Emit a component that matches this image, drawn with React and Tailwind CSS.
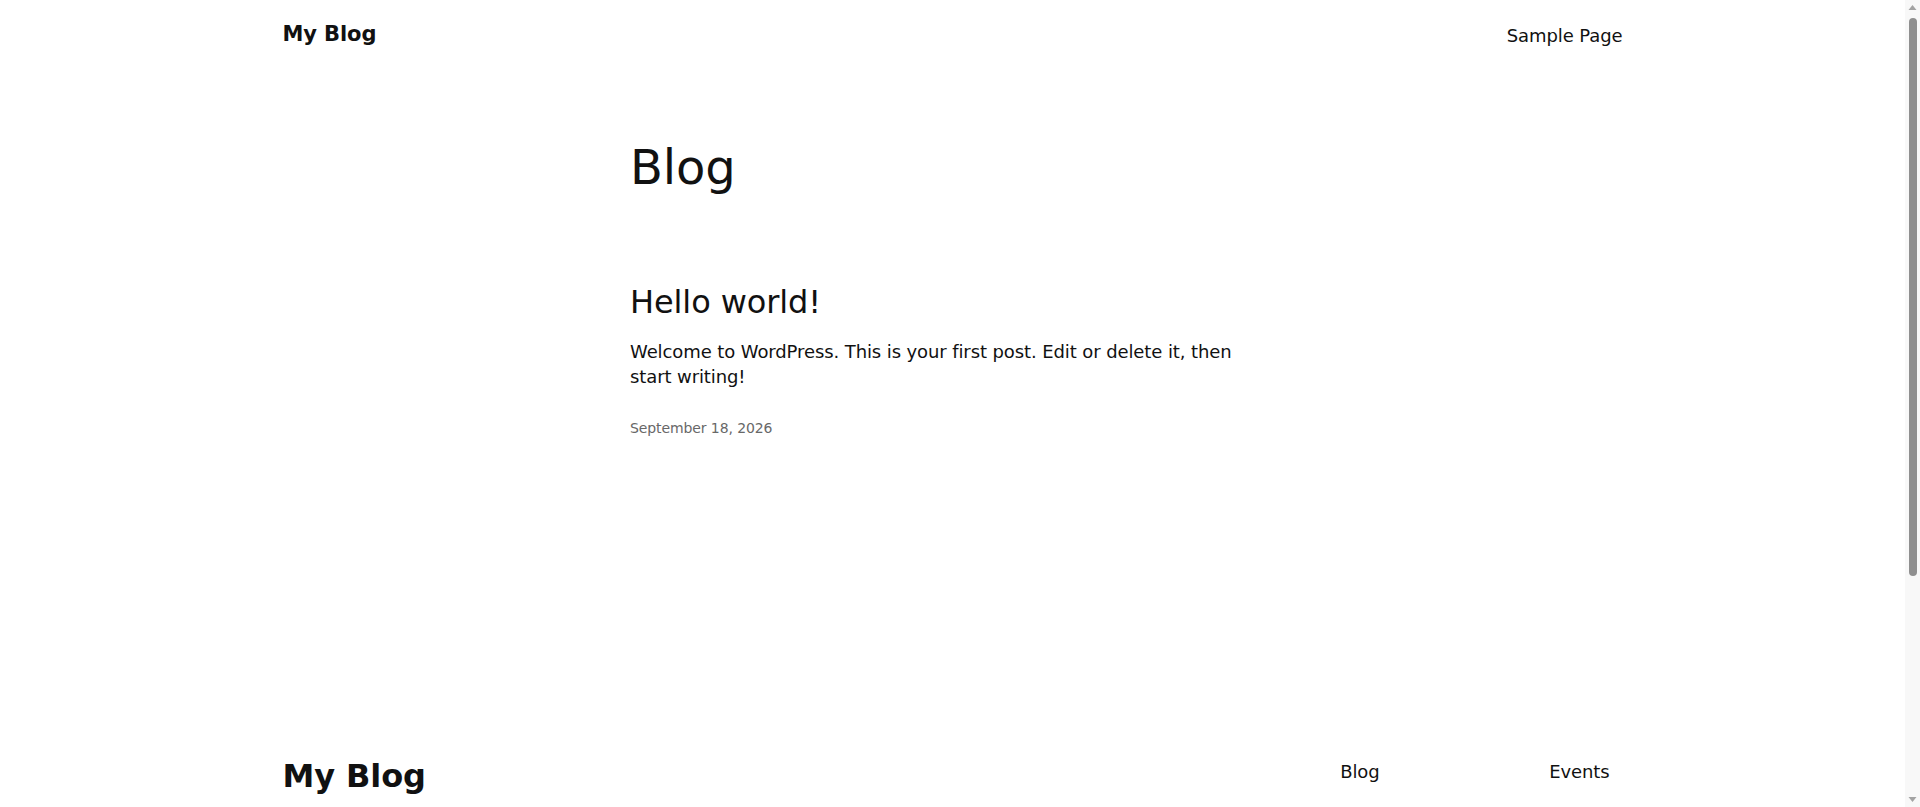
function Scrollbar() {
    // Drawn stand-in for the browser's classic vertical scrollbar
    return (
        <div className="fixed top-0 right-0 h-screen w-[15px] bg-[#f8f8f8] flex flex-col items-center">
            <svg width="15" height="15" viewBox="0 0 15 15" className="shrink-0">
                <polygon points="3.5,10 11.5,10 7.5,5" fill="#a3a3a3" />
            </svg>
            <div className="w-[8px] h-[558px] mt-[3px] rounded-full bg-[#8f8f8f]"></div>
            <div className="flex-1"></div>
            <svg width="15" height="15" viewBox="0 0 15 15" className="shrink-0">
                <polygon points="3.5,5 11.5,5 7.5,10" fill="#a3a3a3" />
            </svg>
        </div>
    );
}

export default function App() {
    // Footer link columns
    const columns = [
        ["Blog", "About", "FAQs", "Authors"],
        ["Events", "Shop", "Patterns", "Themes"],
    ];

    return (
        <div className="min-h-screen bg-white text-[#111111] font-['DejaVu_Sans',sans-serif] tracking-[-0.1px] pr-[15px]">

            {/* Header */}
            <header className="max-w-[1340px] mx-auto flex justify-between items-start pt-[20px]">
                <a className="text-[21px] leading-[28px] font-bold">My Blog</a>
                <nav className="pt-[2px]">
                    <a className="text-[18px] leading-[28px]">Sample Page</a>
                </nav>
            </header>

            {/* Main content */}
            <main className="max-w-[645px] mx-auto pt-[90px]">
                <h1 className="text-[48px] leading-[54px] font-normal">Blog</h1>

                <article className="mt-[90px]">
                    <h2 className="text-[32px] leading-[36px] font-normal">Hello world!</h2>
                    <p className="mt-[19px] text-[18px] leading-[25.2px]">
                        Welcome to WordPress. This is your first post. Edit or delete it, then start writing!
                    </p>
                    <p className="mt-[30px] text-[14px] leading-[19.6px] text-[#686868]">September 18, 2026</p>
                </article>
            </main>

            {/* Footer */}
            <footer className="max-w-[1340px] mx-auto mt-[315px] pb-[64px]">
                <div className="flex justify-between items-start">
                    <a className="text-[32px] leading-[44.8px] font-bold">My Blog</a>
                    <div className="flex pt-[5px]">
                        {columns.map((col, i) => (
                            <ul key={i} className={`flex flex-col gap-[26px] text-[18px] leading-[25.2px] ${i === 0 ? "w-[209px]" : ""}`}>
                                {col.map((item) => (
                                    <li key={item}>{item}</li>
                                ))}
                            </ul>
                        ))}
                    </div>
                </div>

                <div className="flex justify-between items-center mt-[100px] text-[14px] leading-[19.6px]">
                    <p>Twenty Twenty-Five</p>
                    <p>Designed with <span className="underline">WordPress</span></p>
                </div>
            </footer>

            <Scrollbar />
        </div>
    );
}
